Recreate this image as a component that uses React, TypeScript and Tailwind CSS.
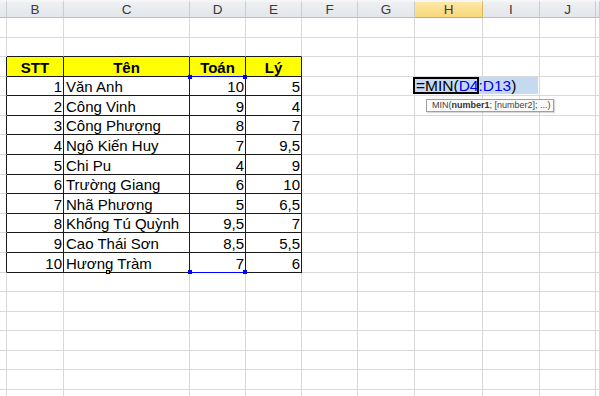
import React from "react";

type Row = { stt: number; name: string; toan: string; ly: string };

const DATA: Row[] = [
  { stt: 1, name: "Văn Anh", toan: "10", ly: "5" },
  { stt: 2, name: "Công Vinh", toan: "9", ly: "4" },
  { stt: 3, name: "Công Phượng", toan: "8", ly: "7" },
  { stt: 4, name: "Ngô Kiến Huy", toan: "7", ly: "9,5" },
  { stt: 5, name: "Chi Pu", toan: "4", ly: "9" },
  { stt: 6, name: "Trường Giang", toan: "6", ly: "10" },
  { stt: 7, name: "Nhã Phương", toan: "5", ly: "6,5" },
  { stt: 8, name: "Khổng Tú Quỳnh", toan: "9,5", ly: "7" },
  { stt: 9, name: "Cao Thái Sơn", toan: "8,5", ly: "5,5" },
  { stt: 10, name: "Hương Tràm", toan: "7", ly: "6" },
];

const LETTERS = ["", "B", "C", "D", "E", "F", "G", "H", "I", "J", ""];
const ROW_COUNT = 20;
const TABLE_TOP = 3; // header row of the table
const TABLE_BOTTOM = 13; // last data row

function cellText(r: number, c: number): { text: string; align: "l" | "r" | "c"; bold?: boolean } | null {
  if (r === TABLE_TOP) {
    const heads = ["", "STT", "Tên", "Toán", "Lý"];
    if (c >= 1 && c <= 4) return { text: heads[c], align: "c", bold: true };
    return null;
  }
  if (r > TABLE_TOP && r <= TABLE_BOTTOM) {
    const d = DATA[r - TABLE_TOP - 1];
    if (c === 1) return { text: String(d.stt), align: "r" };
    if (c === 2) return { text: d.name, align: "l" };
    if (c === 3) return { text: d.toan, align: "r" };
    if (c === 4) return { text: d.ly, align: "r" };
  }
  return null;
}

// Table cells get black borders, the range D4:D13 blue ones, the rest light gridlines.
function rightBorder(r: number, c: number): string {
  if ((c === 2 || c === 3) && r > TABLE_TOP && r <= TABLE_BOTTOM) return "border-r-[#0000ff]";
  if (r >= TABLE_TOP && r <= TABLE_BOTTOM && c >= 0 && c <= 4) return "border-r-[#1a1a1a]";
  return "border-r-[#d9d9d9]";
}

function bottomBorder(r: number, c: number): string {
  if (c === 3 && (r === TABLE_TOP || r === TABLE_BOTTOM)) return "border-b-[#0000ff]";
  if (c >= 1 && c <= 4 && r >= TABLE_TOP - 1 && r <= TABLE_BOTTOM) return "border-b-[#1a1a1a]";
  return "border-b-[#d9d9d9]";
}

// Outline of the referenced range D4:D13, with its four corner handles.
function RangeHighlight() {
  return (
    <div className="pointer-events-none absolute -left-[1px] -top-[1px] z-10 h-[196.8px] w-[57px] border border-[#0000ff]">
      <div className="absolute -left-[2px] -top-[2px] h-[4px] w-[4px] bg-[#0000ff]" />
      <div className="absolute -right-[2px] -top-[2px] h-[4px] w-[4px] bg-[#0000ff]" />
      <div className="absolute -bottom-[2px] -left-[2px] h-[4px] w-[4px] bg-[#0000ff]" />
      <div className="absolute -bottom-[2px] -right-[2px] h-[4px] w-[4px] bg-[#0000ff]" />
    </div>
  );
}

// In-cell editor of H4: the text runs past the cell into I4, with the argument hint below.
function FormulaEditor() {
  return (
    <div className="absolute -left-[2px] top-0 z-20 flex flex-col items-start">
      <div className="relative flex h-[17px] w-[125px] items-center bg-[#c5d9f1] pl-[3px]">
        <div className="absolute inset-y-0 left-0 w-[66px] border-2 border-black" />
        <span className="relative whitespace-nowrap text-[15.5px] leading-[17px] text-black">
          =MIN(<span className="text-[#0000ff]">D4:D13</span>)
        </span>
      </div>
      <div className="ml-[13px] mt-[5px] flex h-[13px] w-[128px] items-center whitespace-nowrap border border-[#a0a0a0] bg-[#fbfbfb] pl-[5px] text-[9px] leading-[10px] text-[#444444] shadow-[1px_1px_1px_rgba(0,0,0,0.15)]">
        MIN(<span className="font-bold text-[#333333]">number1</span>; [number2]; ...)
      </div>
    </div>
  );
}

export default function App() {
  const rows = Array.from({ length: ROW_COUNT }, (_, i) => i + 1);
  const cols = LETTERS.map((_, i) => i);

  return (
    <div
      className="h-[396px] w-[600px] overflow-hidden bg-white"
      style={{ fontFamily: '"Liberation Sans", Arial, sans-serif' }}
    >
      <div className="grid grid-cols-[7px_57px_126px_56px_56px_56px_57px_68px_57px_56px_1fr] grid-rows-[18px] auto-rows-[19.58px]">
        {/* column headers */}
        {cols.map((c) => {
          const active = c === 7;
          return (
            <div
              key={`h${c}`}
              className={
                active
                  ? "flex items-center justify-center border-r border-b border-t-2 border-t-[#f6f6f6] border-r-[#e2b65a] border-b-[#e0a83e] bg-gradient-to-b from-[#fde9a8] to-[#f9d67a] text-[13.5px] leading-none text-[#3a3a3a]"
                  : "flex items-center justify-center border-r border-b border-t-2 border-t-[#f6f6f6] border-r-[#c8ccd1] border-b-[#b9bec4] bg-gradient-to-b from-[#eef0f3] to-[#e3e6ea] text-[13.5px] leading-none text-[#3a3a3a]"
              }
            >
              {LETTERS[c]}
            </div>
          );
        })}

        {/* sheet cells */}
        {rows.map((r) =>
          cols.map((c) => {
            const t = cellText(r, c);
            const yellow = r === TABLE_TOP && c >= 1 && c <= 4;
            const isEditing = r === 4 && c === 7;
            const isRangeStart = r === 4 && c === 3;
            const align =
              t?.align === "r" ? "justify-end pr-[1px]" : t?.align === "c" ? "justify-center" : "justify-start pl-[2px]";
            return (
              <div
                key={`${r}-${c}`}
                className={`relative flex items-end border-r border-b ${rightBorder(r, c)} ${bottomBorder(r, c)} ${
                  yellow ? "bg-[#ffff00]" : ""
                } ${align} ${isEditing || isRangeStart ? "z-20" : ""}`}
              >
                {t && (
                  <span className={`whitespace-nowrap text-[15px] leading-[17px] text-black ${t.bold ? "font-bold" : ""}`}>
                    {t.text}
                  </span>
                )}
                {isRangeStart && <RangeHighlight />}
                {c === 2 && r === TABLE_BOTTOM && (
                  <div className="absolute -bottom-[2px] left-[42px] z-10 h-[4px] w-[4px] border border-black bg-[#f3c843]" />
                )}
                {isEditing && <FormulaEditor />}
              </div>
            );
          })
        )}
      </div>
    </div>
  );
}
